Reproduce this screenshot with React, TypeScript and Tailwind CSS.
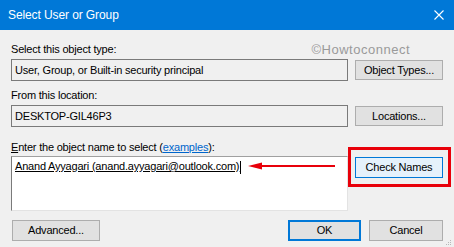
import React from 'react'

function Btn({ label, className = '' }: { label: string; className?: string }) {
  return (
    <div className={`flex items-center justify-center bg-[#e1e1e1] border border-[#adadad] text-black ${className}`}>
      {label}
    </div>
  )
}

function App() {
  return (
    <div className="w-[454px] h-[247px] bg-[#f0f0f0] relative overflow-hidden text-[11px] leading-[15px] tracking-[-0.2px] text-black font-['Liberation_Sans',Arial,sans-serif]">
      {/* title bar */}
      <div className="h-[30px] bg-[#0078d7] flex items-center justify-between pl-[8px] pr-[10px] text-white text-[12px] tracking-[-0.1px]">
        <span>Select User or Group</span>
        <svg width="10" height="10" viewBox="0 0 10 10">
          <path d="M0.5 0.5L9.5 9.5M9.5 0.5L0.5 9.5" stroke="white" strokeWidth="1.1" />
        </svg>
      </div>

      <div className="pl-[11px] pr-[11px]">
        {/* object type */}
        <div className="mt-[12px] flex items-end justify-between">
          <span>Select this object type:</span>
          <span className="text-[#9a9a9a] text-[13px] tracking-[0.5px] mr-[33px]">©Howtoconnect</span>
        </div>
        <div className="mt-[2px] flex items-center gap-[7px]">
          <div className="w-[337px] h-[22px] border border-[#7a7a7a] bg-[#f0f0f0] flex items-center pl-[3px]">
            User, Group, or Built-in security principal
          </div>
          <Btn label="Object Types..." className="w-[88px] h-[20px]" />
        </div>

        {/* location */}
        <div className="mt-[7px]">From this location:</div>
        <div className="mt-[2px] flex items-center gap-[7px]">
          <div className="w-[337px] h-[22px] border border-[#7a7a7a] bg-[#f0f0f0] flex items-center pl-[3px]">
            DESKTOP-GIL46P3
          </div>
          <Btn label="Locations..." className="w-[88px] h-[20px]" />
        </div>

        {/* object name */}
        <div className="mt-[13px]">
          <span className="underline">E</span>nter the object name to select (
          <span className="text-[#0066cc] underline">examples</span>):
        </div>
        <div className="mt-[1px] flex items-start gap-[7px] relative">
          <div className="w-[337px] h-[55px] bg-white border-t border-l border-t-[#a0a0a0] border-l-[#7a7a7a] border-r border-b border-r-[#e3e3e3] border-b-[#e3e3e3] pl-[3px] pt-[2px]">
            <span className="underline">Anand Ayyagari (anand.ayyagari@outlook.com)</span>
            <span className="inline-block w-[1px] h-[13px] bg-black align-middle ml-[1px]" />
          </div>
          <div className="mt-[1px] w-[88px] h-[21px] flex items-center justify-center bg-[#e5f1fb] border border-[#0078d7]">
            Check Names
          </div>
          {/* highlight box */}
          <div className="absolute left-[337px] top-[-9px] w-[103px] h-[40px] border-[3px] border-[#e8000a]" />
          {/* arrow */}
          <svg className="absolute left-[237px] top-[5px]" width="88" height="10" viewBox="0 0 88 10">
            <path d="M0 5L14 1.5L14 8.5Z" fill="#e8000a" />
            <path d="M12 5H87" stroke="#e8000a" strokeWidth="2.2" />
          </svg>
        </div>

        {/* bottom buttons */}
        <div className="mt-[9px] flex items-center">
          <Btn label="Advanced..." className="ml-[1px] w-[88px] h-[21px]" />
          <div className="ml-auto w-[73px] h-[21px] flex items-center justify-center bg-[#e1e1e1] border-2 border-[#0078d7]">OK</div>
          <Btn label="Cancel" className="ml-[8px] w-[74px] h-[21px]" />
        </div>
      </div>

      {/* resize grip */}
      <svg className="absolute right-[2px] bottom-[1px]" width="7" height="7" viewBox="0 0 7 7">
        <rect x="5" y="1" width="1" height="1" fill="#b8b8b8" />
        <rect x="3" y="3" width="1" height="1" fill="#b8b8b8" />
        <rect x="5" y="3" width="1" height="1" fill="#b8b8b8" />
        <rect x="1" y="5" width="1" height="1" fill="#b8b8b8" />
        <rect x="3" y="5" width="1" height="1" fill="#b8b8b8" />
        <rect x="5" y="5" width="1" height="1" fill="#b8b8b8" />
      </svg>
    </div>
  )
}

export default App
